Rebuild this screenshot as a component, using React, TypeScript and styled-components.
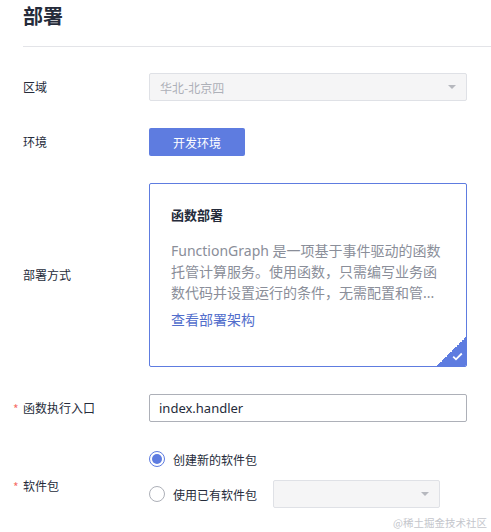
import React from 'react';
import styled, { createGlobalStyle } from 'styled-components';

const GlobalStyle = createGlobalStyle`
  html, body {
    margin: 0;
    padding: 0;
    background: #ffffff;
  }
  body {
    font-family: "Noto Sans", "Noto Sans CJK SC", sans-serif;
    color: #252b3a;
  }
  * { box-sizing: border-box; }
`;

const Page = styled.div`
  position: relative;
  width: 491px;
  height: 532px;
  padding: 0 0 0 23px;
  overflow: hidden;
`;

const Title = styled.h1`
  margin: 0;
  padding-top: 3px;
  font-size: 20px;
  line-height: 26px;
  font-weight: 700;
  color: #252b3a;
  font-family: "Noto Sans CJK SC", sans-serif;
`;

const Divider = styled.div`
  margin-top: 17px;
  height: 1px;
  background: #e3e4e8;
`;

const Form = styled.div`
  display: flex;
  flex-direction: column;
  padding-top: 26px;
  width: 444px;
`;

const Row = styled.div<{ $gap?: number; $top?: boolean }>`
  display: flex;
  align-items: ${(p) => (p.$top ? 'flex-start' : 'center')};
  margin-bottom: ${(p) => p.$gap ?? 27}px;
`;

const Label = styled.div<{ $required?: boolean; $offset?: number }>`
  position: relative;
  width: 126px;
  flex-shrink: 0;
  font-size: 12px;
  line-height: 18px;
  color: #252b3a;
  font-family: "Noto Sans CJK SC", sans-serif;
  padding-top: ${(p) => p.$offset ?? 0}px;

  ${(p) =>
    p.$required &&
    `
    &::before {
      content: '*';
      position: absolute;
      left: -10px;
      top: ${(p.$offset ?? 0) + 1}px;
      color: #f66f6a;
      font-size: 12px;
    }
  `}
`;

const Select = styled.div<{ $width?: number }>`
  display: flex;
  align-items: center;
  justify-content: space-between;
  width: ${(p) => (p.$width ? `${p.$width}px` : '318px')};
  height: 28px;
  padding: 0 10px 0 10px;
  background: #f5f5f6;
  border: 1px solid #dfe1e6;
  border-radius: 2px;
  font-size: 12px;
  color: #adb0b8;
  font-family: "Noto Sans CJK SC", sans-serif;
`;

const Caret = styled.span`
  width: 0;
  height: 0;
  border-left: 4px solid transparent;
  border-right: 4px solid transparent;
  border-top: 4px solid #b6b8be;
`;

const EnvButton = styled.button`
  width: 96px;
  height: 28px;
  border: none;
  border-radius: 2px;
  background: #5e7ce0;
  color: #ffffff;
  font-size: 12px;
  font-family: "Noto Sans CJK SC", sans-serif;
  cursor: pointer;
`;

const Card = styled.div`
  position: relative;
  width: 318px;
  height: 184px;
  padding: 20px 20px 0 21px;
  border: 1px solid #5e7ce0;
  border-radius: 2px;
  overflow: hidden;
`;

const CardTitle = styled.div`
  font-size: 13px;
  line-height: 22px;
  font-weight: 700;
  color: #252b3a;
  font-family: "Noto Sans CJK SC", sans-serif;
`;

const CardDesc = styled.div`
  margin-top: 14px;
  height: 63px;
  font-size: 14px;
  line-height: 21px;
  color: #8a8e99;
`;

const CardLink = styled.a`
  display: block;
  margin-top: 5px;
  font-size: 14px;
  line-height: 22px;
  color: #526ecc;
  text-decoration: none;
  font-family: "Noto Sans CJK SC", sans-serif;
`;

const Corner = styled.div`
  position: absolute;
  right: 0;
  bottom: 0;
  width: 29px;
  height: 29px;
  background: linear-gradient(135deg, transparent 50%, #5e7ce0 50%);
`;

const CornerCheck = styled.svg`
  position: absolute;
  right: 3px;
  bottom: 5px;
`;

const TextInput = styled.div`
  display: flex;
  align-items: center;
  width: 318px;
  height: 28px;
  padding: 0 9px;
  border: 1px solid #adb0b8;
  border-radius: 2px;
  font-size: 13px;
  color: #252b3a;
`;

const RadioGroup = styled.div`
  display: flex;
  flex-direction: column;
  gap: 7px;
`;

const RadioRow = styled.label`
  display: flex;
  align-items: center;
  height: 28px;
  font-size: 12px;
  color: #252b3a;
  font-family: "Noto Sans CJK SC", sans-serif;
`;

const RadioDot = styled.span<{ $checked?: boolean }>`
  position: relative;
  width: 16px;
  height: 16px;
  margin-right: 8px;
  border-radius: 50%;
  border: 1px solid ${(p) => (p.$checked ? '#5e7ce0' : '#adb0b8')};
  background: #ffffff;
  flex-shrink: 0;

  ${(p) =>
    p.$checked &&
    `
    &::after {
      content: '';
      position: absolute;
      left: 2px;
      top: 2px;
      width: 10px;
      height: 10px;
      border-radius: 50%;
      background: #5e7ce0;
    }
  `}
`;

const RadioText = styled.span`
  width: 100px;
`;

const Watermark = styled.div`
  position: absolute;
  right: 4px;
  bottom: 2px;
  font-size: 10.5px;
  color: #c4c6cc;
  font-family: "Noto Sans CJK SC", sans-serif;
`;

const App: React.FC = () => {
  return (
    <Page>
      <GlobalStyle />
      <Title>部署</Title>
      <Divider />
      <Form>
        <Row>
          <Label>区域</Label>
          <Select>
            <span>华北-北京四</span>
            <Caret />
          </Select>
        </Row>
        <Row>
          <Label>环境</Label>
          <EnvButton>开发环境</EnvButton>
        </Row>
        <Row>
          <Label>部署方式</Label>
          <Card>
            <CardTitle>函数部署</CardTitle>
            <CardDesc>
              FunctionGraph 是一项基于事件驱动的函数托管计算服务。使用函数，只需编写业务函数代码并设置运行的条件，无需配置和管...
            </CardDesc>
            <CardLink href="#">查看部署架构</CardLink>
            <Corner>
              <CornerCheck width="11" height="9" viewBox="0 0 11 9">
                <path d="M1.2 4.6 L4 7.3 L9.8 1.5" fill="none" stroke="#ffffff" strokeWidth="1.8" />
              </CornerCheck>
            </Corner>
          </Card>
        </Row>
        <Row $gap={23}>
          <Label $required>函数执行入口</Label>
          <TextInput>index.handler</TextInput>
        </Row>
        <Row $top>
          <Label $required $offset={32}>软件包</Label>
          <RadioGroup>
            <RadioRow>
              <RadioDot $checked />
              <RadioText>创建新的软件包</RadioText>
            </RadioRow>
            <RadioRow>
              <RadioDot />
              <RadioText>使用已有软件包</RadioText>
              <Select $width={167}>
                <span />
                <Caret />
              </Select>
            </RadioRow>
          </RadioGroup>
        </Row>
      </Form>
      <Watermark>@稀土掘金技术社区</Watermark>
    </Page>
  );
};

export default App;
